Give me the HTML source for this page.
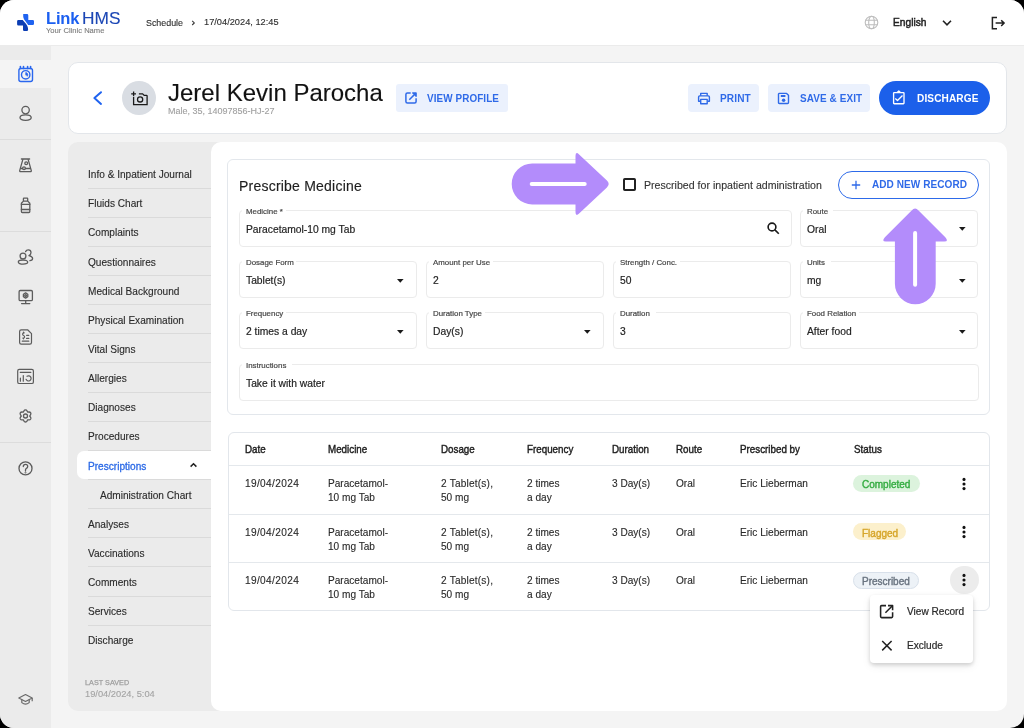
<!DOCTYPE html>
<html><head><meta charset="utf-8"><title>Link HMS</title>
<style>
*{box-sizing:border-box;margin:0;padding:0}
html,body{width:1024px;height:728px;overflow:hidden;background:#000}
body{font-family:"Liberation Sans",sans-serif;color:#1f1f1f;position:relative;-webkit-font-smoothing:antialiased}
#app{position:absolute;left:0;top:0;width:1024px;height:728px;background:#f4f4f4;border-radius:14px;overflow:hidden}
.abs{position:absolute}
#hdr{position:absolute;left:0;top:0;width:1024px;height:46px;background:#fff;border-bottom:1px solid #ebebeb}
#side{position:absolute;left:0;top:46px;width:51px;height:682px;background:#ebebeb}
#pcard{position:absolute;left:68px;top:62px;width:938.5px;height:71.8px;background:#fff;border:1px solid #e3e6ea;border-radius:10px}
#nav{position:absolute;left:68px;top:142px;width:160px;height:569px;background:#ebebeb;border-radius:10px}
#main{position:absolute;left:211px;top:142px;width:795.5px;height:569px;background:#fff;border-radius:10px}
.t{position:absolute;white-space:nowrap;line-height:1;will-change:transform}
</style></head>
<body>
<div id="app">
<div id="hdr"><svg class="abs" style="left:13px;top:10px" width="25" height="25" viewBox="0 0 25 25"><path fill="#1f63f0" d="M10.2,4.1 H14 Q15.3,4.1 15.3,5.4 V10 H19.7 Q21,10 21,11.3 V13.8 Q21,15.1 19.7,15.1 H15.2 C14.2,12.6 10.2,9.6 10.2,6.2 Z"/><path fill="#0b3db3" d="M4.1,11.3 Q4.1,10 5.4,10 H9.7 C11.2,12 15.1,15.2 15.1,19.2 V19.7 Q15.1,21 13.8,21 H11.3 Q10,21 10,19.7 V15.5 H5.4 Q4.1,15.5 4.1,14.2 Z"/></svg>
<div class="t" style="left:45.5px;top:10.33px;font-size:16.5px;color:#1b5ff0;font-weight:bold;letter-spacing:-0.2px">Link</div>
<div class="t" style="left:82px;top:9.66px;font-size:17.3px;color:#1c47b5;font-weight:normal;;-webkit-text-stroke:0.12px #1c47b5">HMS</div>
<div class="t" style="left:45.5px;top:26.57px;font-size:7.6px;color:#7c7c7c;font-weight:normal;;-webkit-text-stroke:0.12px #7c7c7c">Your Clinic Name</div>
<div class="t" style="left:146.2px;top:18.57px;font-size:8.9px;color:#2e2e2e;font-weight:normal;;-webkit-text-stroke:0.12px #2e2e2e">Schedule</div>
<svg class="abs" style="left:190px;top:19px" width="6" height="7" viewBox="0 0 6 7"><path d="M2.2,1.8 L4.3,3.9 L2.2,6" fill="none" stroke="#3a3a3a" stroke-width="1.1"/></svg>
<div class="t" style="left:204px;top:18.27px;font-size:9.25px;color:#2e2e2e;font-weight:normal;;-webkit-text-stroke:0.12px #2e2e2e">17/04/2024, 12:45</div>
<svg class="abs" style="left:864px;top:15px" width="15" height="15" viewBox="0 0 15 15"><g fill="none" stroke="#bdbdbd" stroke-width="1.1"><circle cx="7.5" cy="7.5" r="6.3"/><ellipse cx="7.5" cy="7.5" rx="2.8" ry="6.3"/><path d="M1.4,5.3 H13.6 M1.4,9.7 H13.6"/></g></svg>
<div class="t" style="left:893px;top:18.37px;font-size:10.2px;color:#222;font-weight:normal;;-webkit-text-stroke:0.45px #222">English</div>
<svg class="abs" style="left:941px;top:18px" width="12" height="10" viewBox="0 0 12 10"><path d="M2,2.8 L6,6.8 L10,2.8" fill="none" stroke="#222" stroke-width="1.6"/></svg>
<svg class="abs" style="left:988px;top:14px" width="20" height="18" viewBox="0 0 20 18"><g fill="none" stroke="#222" stroke-width="1.5"><path d="M9,3.4 H4.4 V14.8 H9"/><path d="M7.6,9.1 H16 M13.2,6.2 L16.1,9.1 L13.2,12"/></g></svg>
</div>
<div id="side"><div class="abs" style="left:0;top:14px;width:51px;height:28px;background:#f4f4f4"></div>
<div class="abs" style="left:0;top:93px;width:51px;height:1px;background:#dcdcdc"></div>
<div class="abs" style="left:0;top:184.5px;width:51px;height:1px;background:#dcdcdc"></div>
<div class="abs" style="left:0;top:396px;width:51px;height:1px;background:#dcdcdc"></div>
</div>
<svg class="abs" style="left:13px;top:62px" width="25" height="25" viewBox="0 0 25 25"><g fill="none" stroke="#2a67ee" stroke-width="1.4" stroke-linecap="round" stroke-linejoin="round"><rect x="5.9" y="6.5" width="13.6" height="13" rx="2"/><path d="M7.4,4.6 V6.5 M10.5,4.6 V6.5 M14.6,4.6 V6.5 M17.6,4.6 V6.5" stroke-width="1.6"/><circle cx="12.7" cy="12.8" r="4.2"/><path d="M12.7,12.8 V10.5 A2.3,2.3 0 0 1 14.7,13.9 Z" fill="#2a67ee" stroke-width="0.6"/></g></svg>
<svg class="abs" style="left:13px;top:101px" width="25" height="25" viewBox="0 0 25 25"><g fill="none" stroke="#5c5c5c" stroke-width="1.3" stroke-linecap="round" stroke-linejoin="round"><circle cx="12.6" cy="9.1" r="3.7"/><ellipse cx="12.6" cy="16.6" rx="5.6" ry="2.7"/></g></svg>
<svg class="abs" style="left:13px;top:153px" width="25" height="25" viewBox="0 0 25 25"><g fill="none" stroke="#5c5c5c" stroke-width="1.3" stroke-linecap="round" stroke-linejoin="round"><path d="M8.4,6 H16.6"/><path d="M9.8,6.6 L6.7,17.6 Q6.5,18.7 7.6,18.7 H17.4 Q18.5,18.7 18.3,17.6 L15.2,6.6"/><circle cx="13.2" cy="10.3" r="1.4"/><circle cx="11" cy="15.2" r="1.4"/><path d="M7.8,15.5 H9.6 M12.4,15.5 H17.3"/></g></svg>
<svg class="abs" style="left:13px;top:193px" width="25" height="25" viewBox="0 0 25 25"><g fill="none" stroke="#5c5c5c" stroke-width="1.3" stroke-linecap="round" stroke-linejoin="round"><rect x="10.4" y="5.2" width="4.3" height="3" rx="0.6"/><path d="M10.2,8.4 L8.4,10.3 V18.6 Q8.4,19.5 9.3,19.5 H15.9 Q16.8,19.5 16.8,18.6 V10.3 L15,8.4"/><path d="M8.4,11.4 H16.8 M8.4,16.5 H16.8"/></g></svg>
<svg class="abs" style="left:13px;top:245px" width="25" height="25" viewBox="0 0 25 25"><g fill="none" stroke="#5c5c5c" stroke-width="1.3" stroke-linecap="round" stroke-linejoin="round"><circle cx="10" cy="11" r="2.9"/><ellipse cx="10" cy="17.1" rx="4.7" ry="2.1"/><path d="M12.6,6.6 Q13.4,4.9 15.3,4.9 Q18,4.9 18,7.6 Q18,9.6 16,10.6 Q19.6,11.5 19.6,13.5 Q19.6,15.4 16.9,15.7"/></g></svg>
<svg class="abs" style="left:13px;top:284px" width="25" height="25" viewBox="0 0 25 25"><g fill="none" stroke="#5c5c5c" stroke-width="1.3" stroke-linecap="round" stroke-linejoin="round"><rect x="6.1" y="6.5" width="13.3" height="10.2" rx="1.2"/><path d="M12.7,16.7 V19.6 M8.6,19.6 H16.8"/><path d="M12.6,8.9 L14.8,10.2 V12.8 L12.6,14.1 L10.4,12.8 V10.2 Z"/><circle cx="12.6" cy="11.5" r="0.9"/></g></svg>
<svg class="abs" style="left:13px;top:325px" width="25" height="25" viewBox="0 0 25 25"><g fill="none" stroke="#5c5c5c" stroke-width="1.2" stroke-linecap="round" stroke-linejoin="round"><path d="M8.2,4.8 H14.6 L18.5,8.6 V17.6 Q18.5,19.2 16.9,19.2 H8.2 Q6.6,19.2 6.6,17.6 V6.4 Q6.6,4.8 8.2,4.8 Z"/><path d="M11.2,7.8 Q9.6,7.8 9.6,9.1 Q9.6,10.3 10.5,10.5 Q11.6,10.8 11.6,12 Q11.6,13.1 9.8,13.1 M10.5,7 V7.8 M10.5,13.1 V13.8"/><path d="M13.6,10.3 H15.8 M13.6,13.4 H15.8 M9.3,16.2 H15.8"/></g></svg>
<svg class="abs" style="left:13px;top:364px" width="25" height="25" viewBox="0 0 25 25"><g fill="none" stroke="#5c5c5c" stroke-width="1.2" stroke-linecap="round" stroke-linejoin="round"><rect x="4.7" y="5.4" width="15.7" height="14.1" rx="1.6"/><path d="M7.3,8.4 H17.8 M7.4,14.2 V17.2 M10.3,11.6 V17.2"/><path d="M13.06,15.29 A2.6,2.6 0 1 0 14.0,12.27"/></g></svg>
<svg class="abs" style="left:13px;top:404px" width="25" height="25" viewBox="0 0 25 25"><g fill="none" stroke="#5c5c5c" stroke-width="1.3" stroke-linecap="round" stroke-linejoin="round"><path d="M12.5,5.9 Q13.6,5.9 14.1,7 L14.6,8.1 L15.9,8 Q17.1,7.9 17.7,8.9 Q18.2,9.8 17.5,10.8 L16.7,12 L17.5,13.1 Q18.2,14.1 17.7,15 Q17.1,16 15.9,15.9 L14.6,15.8 L14.1,16.9 Q13.6,18 12.5,18 Q11.4,18 10.9,16.9 L10.4,15.8 L9.1,15.9 Q7.9,16 7.3,15 Q6.8,14.1 7.5,13.1 L8.3,12 L7.5,10.8 Q6.8,9.8 7.3,8.9 Q7.9,7.9 9.1,8 L10.4,8.1 L10.9,7 Q11.4,5.9 12.5,5.9 Z"/><circle cx="12.5" cy="12" r="2"/></g></svg>
<svg class="abs" style="left:13px;top:456px" width="25" height="25" viewBox="0 0 25 25"><g fill="none" stroke="#5c5c5c" stroke-width="1.3" stroke-linecap="round" stroke-linejoin="round"><circle cx="12.5" cy="12.4" r="6.5"/><path d="M10.3,10.6 Q10.3,8.4 12.5,8.4 Q14.7,8.4 14.7,10.4 Q14.7,11.7 13.4,12.4 Q12.5,12.9 12.5,14 V15"/><circle cx="12.5" cy="16.6" r="0.3"/></g></svg>
<svg class="abs" style="left:13px;top:687px" width="25" height="25" viewBox="0 0 25 25"><g fill="none" stroke="#6a6a6a" stroke-width="1.2" stroke-linejoin="round"><path d="M12.5,7.5 L19.2,11 L12.5,14.5 L5.8,11 Z"/><path d="M8.8,12.6 V15.6 Q12.5,18.6 16.2,15.6 V12.6 M19.2,11 V14.2"/></g></svg>

<div id="pcard"></div>
<div id="nav"></div>
<div id="main"></div>
<div class="abs" style="left:76.7px;top:451px;width:140px;height:28px;background:#fff;border-radius:7px 0 0 7px"></div>
<div class="abs" style="left:88px;top:187.50px;width:123px;height:1px;background:#dadada"></div>
<div class="t" style="left:88.3px;top:170.05px;font-size:10.1px;color:#2a2a2a;font-weight:normal;;-webkit-text-stroke:0.12px #2a2a2a">Info &amp; Inpatient Journal</div>
<div class="abs" style="left:88px;top:216.65px;width:123px;height:1px;background:#dadada"></div>
<div class="t" style="left:88.3px;top:199.20px;font-size:10.1px;color:#2a2a2a;font-weight:normal;;-webkit-text-stroke:0.12px #2a2a2a">Fluids Chart</div>
<div class="abs" style="left:88px;top:245.80px;width:123px;height:1px;background:#dadada"></div>
<div class="t" style="left:88.3px;top:228.35px;font-size:10.1px;color:#2a2a2a;font-weight:normal;;-webkit-text-stroke:0.12px #2a2a2a">Complaints</div>
<div class="abs" style="left:88px;top:274.95px;width:123px;height:1px;background:#dadada"></div>
<div class="t" style="left:88.3px;top:257.50px;font-size:10.1px;color:#2a2a2a;font-weight:normal;;-webkit-text-stroke:0.12px #2a2a2a">Questionnaires</div>
<div class="abs" style="left:88px;top:304.10px;width:123px;height:1px;background:#dadada"></div>
<div class="t" style="left:88.3px;top:286.65px;font-size:10.1px;color:#2a2a2a;font-weight:normal;;-webkit-text-stroke:0.12px #2a2a2a">Medical Background</div>
<div class="abs" style="left:88px;top:333.25px;width:123px;height:1px;background:#dadada"></div>
<div class="t" style="left:88.3px;top:315.80px;font-size:10.1px;color:#2a2a2a;font-weight:normal;;-webkit-text-stroke:0.12px #2a2a2a">Physical Examination</div>
<div class="abs" style="left:88px;top:362.40px;width:123px;height:1px;background:#dadada"></div>
<div class="t" style="left:88.3px;top:344.95px;font-size:10.1px;color:#2a2a2a;font-weight:normal;;-webkit-text-stroke:0.12px #2a2a2a">Vital Signs</div>
<div class="abs" style="left:88px;top:391.55px;width:123px;height:1px;background:#dadada"></div>
<div class="t" style="left:88.3px;top:374.10px;font-size:10.1px;color:#2a2a2a;font-weight:normal;;-webkit-text-stroke:0.12px #2a2a2a">Allergies</div>
<div class="abs" style="left:88px;top:420.70px;width:123px;height:1px;background:#dadada"></div>
<div class="t" style="left:88.3px;top:403.25px;font-size:10.1px;color:#2a2a2a;font-weight:normal;;-webkit-text-stroke:0.12px #2a2a2a">Diagnoses</div>
<div class="abs" style="left:88px;top:449.85px;width:123px;height:1px;background:#dadada"></div>
<div class="t" style="left:88.3px;top:432.40px;font-size:10.1px;color:#2a2a2a;font-weight:normal;;-webkit-text-stroke:0.12px #2a2a2a">Procedures</div>
<div class="abs" style="left:88px;top:479.00px;width:123px;height:1px;background:#dadada"></div>
<div class="t" style="left:88.3px;top:461.55px;font-size:10.1px;color:#2c6ae6;font-weight:normal;;-webkit-text-stroke:0.3px #2c6ae6">Prescriptions</div>
<div class="abs" style="left:88px;top:508.15px;width:123px;height:1px;background:#dadada"></div>
<div class="t" style="left:100.2px;top:490.70px;font-size:10.1px;color:#2a2a2a;font-weight:normal;;-webkit-text-stroke:0.12px #2a2a2a">Administration Chart</div>
<div class="abs" style="left:88px;top:537.30px;width:123px;height:1px;background:#dadada"></div>
<div class="t" style="left:88.3px;top:519.85px;font-size:10.1px;color:#2a2a2a;font-weight:normal;;-webkit-text-stroke:0.12px #2a2a2a">Analyses</div>
<div class="abs" style="left:88px;top:566.45px;width:123px;height:1px;background:#dadada"></div>
<div class="t" style="left:88.3px;top:549.00px;font-size:10.1px;color:#2a2a2a;font-weight:normal;;-webkit-text-stroke:0.12px #2a2a2a">Vaccinations</div>
<div class="abs" style="left:88px;top:595.60px;width:123px;height:1px;background:#dadada"></div>
<div class="t" style="left:88.3px;top:578.15px;font-size:10.1px;color:#2a2a2a;font-weight:normal;;-webkit-text-stroke:0.12px #2a2a2a">Comments</div>
<div class="abs" style="left:88px;top:624.75px;width:123px;height:1px;background:#dadada"></div>
<div class="t" style="left:88.3px;top:607.30px;font-size:10.1px;color:#2a2a2a;font-weight:normal;;-webkit-text-stroke:0.12px #2a2a2a">Services</div>
<div class="t" style="left:88.3px;top:636.45px;font-size:10.1px;color:#2a2a2a;font-weight:normal;;-webkit-text-stroke:0.12px #2a2a2a">Discharge</div>
<svg class="abs" style="left:188px;top:461px" width="11" height="8" viewBox="0 0 11 8"><path d="M2.6,5.6 L5.5,2.7 L8.4,5.6" fill="none" stroke="#222" stroke-width="1.5"/></svg>
<div class="t" style="left:85.3px;top:678.91px;font-size:7.2px;color:#9e9e9e;font-weight:normal;letter-spacing:0.05px;-webkit-text-stroke:0.25px #9e9e9e">LAST SAVED</div>
<div class="t" style="left:85.3px;top:689.53px;font-size:9.3px;color:#a3a3a3;font-weight:normal;;-webkit-text-stroke:0.12px #a3a3a3">19/04/2024, 5:04</div>
<svg class="abs" style="left:90px;top:89px" width="16" height="18" viewBox="0 0 16 18"><path d="M11,3.2 L4.4,9 L11,14.9" fill="none" stroke="#1f63f0" stroke-width="2" stroke-linecap="round" stroke-linejoin="round"/></svg>
<div class="abs" style="left:122.2px;top:81.2px;width:33.8px;height:33.8px;border-radius:50%;background:#d9dde3"></div>
<svg class="abs" style="left:130px;top:89px" width="20" height="18" viewBox="0 0 20 18"><g fill="none" stroke="#1a1a1a" stroke-width="1.3"><path d="M3.6,8 V15.7 H17.1 V7 Q17.1,6.4 16.5,6.4 H14.2 L12.6,4.8 H8.9"/><circle cx="10.1" cy="10.4" r="2.6"/><path d="M3.6,2.5 V7.2 M1.2,4.9 H6"/></g></svg>
<div class="t" style="left:168px;top:80.68px;font-size:24px;color:#121212;font-weight:normal;;-webkit-text-stroke:0.12px #121212">Jerel Kevin Parocha</div>
<div class="t" style="left:168px;top:107.28px;font-size:9px;color:#a0a0a0;font-weight:normal;;-webkit-text-stroke:0.12px #a0a0a0">Male, 35, 14097856-HJ-27</div>
<div class="abs" style="left:395.5px;top:84px;width:112.3px;height:28px;border-radius:3px;background:#ebf1fd"></div>
<svg class="abs" style="left:403px;top:91px" width="15" height="15" viewBox="0 0 15 15"><g fill="none" stroke="#2f6ae8" stroke-width="1.5" stroke-linejoin="round"><path d="M7.7,1.9 H4.4 Q2.9,1.9 2.9,3.4 V10.6 Q2.9,12.1 4.4,12.1 H11.6 Q13.1,12.1 13.1,10.6 V7.3"/><path d="M6.3,8.7 L12.6,2.4"/><path d="M9.2,1.9 H13.1 V5.8" fill="#2f6ae8" stroke-width="1.4"/></g></svg>
<div class="t" style="left:427px;top:93.92px;font-size:9.9px;color:#2f6ae8;font-weight:bold;letter-spacing:0.1px;transform:scaleY(1.13);transform-origin:0 8.38px">VIEW PROFILE</div>
<div class="abs" style="left:688.3px;top:84px;width:71.2px;height:28px;border-radius:4px;background:#ebf1fd"></div>
<svg class="abs" style="left:696px;top:91px" width="16" height="15" viewBox="0 0 16 15"><g fill="none" stroke="#2f6ae8" stroke-width="1.4" stroke-linejoin="round"><path d="M4.7,4.7 V2.4 H11.2 V4.7"/><path d="M4.4,10.3 H2.6 V6 Q2.6,4.9 3.7,4.9 H12.3 Q13.4,4.9 13.4,6 V10.3 H11.6"/><rect x="4.7" y="8.4" width="6.5" height="4.4"/></g></svg>
<div class="t" style="left:720px;top:93.95px;font-size:10.1px;color:#2f6ae8;font-weight:bold;letter-spacing:0.1px;transform:scaleY(1.13);transform-origin:0 8.55px">PRINT</div>
<div class="abs" style="left:768.2px;top:84px;width:101.5px;height:28px;border-radius:4px;background:#ebf1fd"></div>
<svg class="abs" style="left:776px;top:91px" width="15" height="15" viewBox="0 0 15 15"><g fill="none" stroke="#2f6ae8" stroke-width="1.4" stroke-linejoin="round"><path d="M3,2.4 H10.6 L12.5,4.3 V11.6 Q12.5,12.5 11.6,12.5 H3.4 Q2.5,12.5 2.5,11.6 V2.9 Z"/><path d="M4.8,5 H9.4" stroke-width="1.9"/></g><circle cx="7.6" cy="9.3" r="1.75" fill="#2f6ae8"/></svg>
<div class="t" style="left:799.8px;top:93.98px;font-size:9.95px;color:#2f6ae8;font-weight:bold;letter-spacing:0.1px;transform:scaleY(1.13);transform-origin:0 8.42px">SAVE &amp; EXIT</div>
<div class="abs" style="left:878.8px;top:81px;width:111px;height:34px;border-radius:17px;background:#1c60ea"></div>
<svg class="abs" style="left:890px;top:89px" width="17" height="17" viewBox="0 0 17 17"><g fill="none" stroke="#fff" stroke-width="1.35" stroke-linejoin="round"><rect x="3.6" y="3.6" width="10.4" height="11.1" rx="0.6"/><path d="M7.2,3.4 L8.8,1.9 L10.4,3.4 Z" fill="#fff"/><path d="M5.3,9.6 L7.5,11.5 L12.5,6.5" stroke-width="1.35"/></g></svg>
<div class="t" style="left:916.5px;top:93.75px;font-size:10.1px;color:#fff;font-weight:bold;letter-spacing:0.1px;transform:scaleY(1.13);transform-origin:0 8.55px">DISCHARGE</div>
<div class="abs" style="left:227px;top:159px;width:762.5px;height:255.5px;border:1px solid #e3e7ec;border-radius:6px;background:#fff"></div>
<div class="t" style="left:239.4px;top:178.55px;font-size:14px;color:#1e1e1e;font-weight:normal;letter-spacing:0.22px;-webkit-text-stroke:0.15px #1e1e1e">Prescribe Medicine</div>
<div class="abs" style="left:623px;top:178.3px;width:12.8px;height:12.8px;border:2px solid #222;border-radius:1.8px"></div>
<div class="t" style="left:644px;top:179.63px;font-size:10.6px;color:#333;font-weight:normal;;-webkit-text-stroke:0.12px #333">Prescribed for inpatient administration</div>
<div class="abs" style="left:837.5px;top:170.5px;width:141px;height:28.2px;border:1.7px solid #2d6ae9;border-radius:14px"></div>
<svg class="abs" style="left:850px;top:179px" width="12" height="12" viewBox="0 0 12 12"><path d="M6,1.8 V10.2 M1.8,6 H10.2" stroke="#2f6ae8" stroke-width="1.3"/></svg>
<div class="t" style="left:872.4px;top:180.39px;font-size:10.05px;color:#2f6ae8;font-weight:bold;letter-spacing:0.05px;transform:scaleY(1.13);transform-origin:0 8.51px">ADD NEW RECORD</div>
<div class="abs" style="left:239px;top:209.8px;width:552.5px;height:37px;border:1px solid #ebebeb;border-radius:4px"></div>
<div class="abs" style="left:242px;top:207.8px;width:44px;height:4px;background:#fff"></div>
<div class="t" style="left:245.8px;top:207.81px;font-size:7.9px;color:#474747;font-weight:normal;;-webkit-text-stroke:0.2px #474747">Medicine *</div>
<div class="t" style="left:246px;top:224.88px;font-size:10.3px;color:#222;font-weight:normal;;-webkit-text-stroke:0.18px #222">Paracetamol-10 mg Tab</div>
<svg class="abs" style="left:766.1px;top:221.20000000000002px" width="15" height="15" viewBox="0 0 15 15"><g fill="none" stroke="#1a1a1a" stroke-width="1.6"><circle cx="6" cy="6" r="3.9"/><path d="M8.9,8.9 L12.8,12.8"/></g></svg>
<div class="abs" style="left:800.4px;top:209.8px;width:178.1px;height:37px;border:1px solid #ebebeb;border-radius:4px"></div>
<div class="abs" style="left:803.4px;top:207.8px;width:30px;height:4px;background:#fff"></div>
<div class="t" style="left:807.1999999999999px;top:207.81px;font-size:7.9px;color:#474747;font-weight:normal;;-webkit-text-stroke:0.2px #474747">Route</div>
<div class="t" style="left:807.4px;top:224.88px;font-size:10.3px;color:#222;font-weight:normal;;-webkit-text-stroke:0.18px #222">Oral</div>
<svg class="abs" style="left:956.5px;top:226.10000000000002px" width="10" height="6" viewBox="0 0 10 6"><path d="M2,1 H8.6 L5.3,4.7 Z" fill="#1a1a1a"/></svg>
<div class="abs" style="left:239px;top:261.3px;width:178.1px;height:37px;border:1px solid #ebebeb;border-radius:4px"></div>
<div class="abs" style="left:242px;top:259.3px;width:54px;height:4px;background:#fff"></div>
<div class="t" style="left:245.8px;top:259.31px;font-size:7.9px;color:#474747;font-weight:normal;;-webkit-text-stroke:0.2px #474747">Dosage Form</div>
<div class="t" style="left:246px;top:276.38px;font-size:10.3px;color:#222;font-weight:normal;;-webkit-text-stroke:0.18px #222">Tablet(s)</div>
<svg class="abs" style="left:395.1px;top:277.6px" width="10" height="6" viewBox="0 0 10 6"><path d="M2,1 H8.6 L5.3,4.7 Z" fill="#1a1a1a"/></svg>
<div class="abs" style="left:426.2px;top:261.3px;width:178.1px;height:37px;border:1px solid #ebebeb;border-radius:4px"></div>
<div class="abs" style="left:429.2px;top:259.3px;width:64px;height:4px;background:#fff"></div>
<div class="t" style="left:433.0px;top:259.31px;font-size:7.9px;color:#474747;font-weight:normal;;-webkit-text-stroke:0.2px #474747">Amount per Use</div>
<div class="t" style="left:433.2px;top:276.38px;font-size:10.3px;color:#222;font-weight:normal;;-webkit-text-stroke:0.18px #222">2</div>
<div class="abs" style="left:613.3px;top:261.3px;width:178.1px;height:37px;border:1px solid #ebebeb;border-radius:4px"></div>
<div class="abs" style="left:616.3px;top:259.3px;width:64px;height:4px;background:#fff"></div>
<div class="t" style="left:620.0999999999999px;top:259.31px;font-size:7.9px;color:#474747;font-weight:normal;;-webkit-text-stroke:0.2px #474747">Strength / Conc.</div>
<div class="t" style="left:620.3px;top:276.38px;font-size:10.3px;color:#222;font-weight:normal;;-webkit-text-stroke:0.18px #222">50</div>
<div class="abs" style="left:800.4px;top:261.3px;width:178.1px;height:37px;border:1px solid #ebebeb;border-radius:4px"></div>
<div class="abs" style="left:803.4px;top:259.3px;width:28px;height:4px;background:#fff"></div>
<div class="t" style="left:807.1999999999999px;top:259.31px;font-size:7.9px;color:#474747;font-weight:normal;;-webkit-text-stroke:0.2px #474747">Units</div>
<div class="t" style="left:807.4px;top:276.38px;font-size:10.3px;color:#222;font-weight:normal;;-webkit-text-stroke:0.18px #222">mg</div>
<svg class="abs" style="left:956.5px;top:277.6px" width="10" height="6" viewBox="0 0 10 6"><path d="M2,1 H8.6 L5.3,4.7 Z" fill="#1a1a1a"/></svg>
<div class="abs" style="left:239px;top:312.4px;width:178.1px;height:37px;border:1px solid #ebebeb;border-radius:4px"></div>
<div class="abs" style="left:242px;top:310.4px;width:44px;height:4px;background:#fff"></div>
<div class="t" style="left:245.8px;top:310.41px;font-size:7.9px;color:#474747;font-weight:normal;;-webkit-text-stroke:0.2px #474747">Frequency</div>
<div class="t" style="left:246px;top:327.48px;font-size:10.3px;color:#222;font-weight:normal;;-webkit-text-stroke:0.18px #222">2 times a day</div>
<svg class="abs" style="left:395.1px;top:328.7px" width="10" height="6" viewBox="0 0 10 6"><path d="M2,1 H8.6 L5.3,4.7 Z" fill="#1a1a1a"/></svg>
<div class="abs" style="left:426.2px;top:312.4px;width:178.1px;height:37px;border:1px solid #ebebeb;border-radius:4px"></div>
<div class="abs" style="left:429.2px;top:310.4px;width:56px;height:4px;background:#fff"></div>
<div class="t" style="left:433.0px;top:310.41px;font-size:7.9px;color:#474747;font-weight:normal;;-webkit-text-stroke:0.2px #474747">Duration Type</div>
<div class="t" style="left:433.2px;top:327.48px;font-size:10.3px;color:#222;font-weight:normal;;-webkit-text-stroke:0.18px #222">Day(s)</div>
<svg class="abs" style="left:582.3px;top:328.7px" width="10" height="6" viewBox="0 0 10 6"><path d="M2,1 H8.6 L5.3,4.7 Z" fill="#1a1a1a"/></svg>
<div class="abs" style="left:613.3px;top:312.4px;width:178.1px;height:37px;border:1px solid #ebebeb;border-radius:4px"></div>
<div class="abs" style="left:616.3px;top:310.4px;width:40px;height:4px;background:#fff"></div>
<div class="t" style="left:620.0999999999999px;top:310.41px;font-size:7.9px;color:#474747;font-weight:normal;;-webkit-text-stroke:0.2px #474747">Duration</div>
<div class="t" style="left:620.3px;top:327.48px;font-size:10.3px;color:#222;font-weight:normal;;-webkit-text-stroke:0.18px #222">3</div>
<div class="abs" style="left:800.4px;top:312.4px;width:178.1px;height:37px;border:1px solid #ebebeb;border-radius:4px"></div>
<div class="abs" style="left:803.4px;top:310.4px;width:56px;height:4px;background:#fff"></div>
<div class="t" style="left:807.1999999999999px;top:310.41px;font-size:7.9px;color:#474747;font-weight:normal;;-webkit-text-stroke:0.2px #474747">Food Relation</div>
<div class="t" style="left:807.4px;top:327.48px;font-size:10.3px;color:#222;font-weight:normal;;-webkit-text-stroke:0.18px #222">After food</div>
<svg class="abs" style="left:956.5px;top:328.7px" width="10" height="6" viewBox="0 0 10 6"><path d="M2,1 H8.6 L5.3,4.7 Z" fill="#1a1a1a"/></svg>
<div class="abs" style="left:239px;top:363.5px;width:739.5px;height:37px;border:1px solid #ebebeb;border-radius:4px"></div>
<div class="abs" style="left:242px;top:361.5px;width:50px;height:4px;background:#fff"></div>
<div class="t" style="left:245.8px;top:361.51px;font-size:7.9px;color:#474747;font-weight:normal;;-webkit-text-stroke:0.2px #474747">Instructions</div>
<div class="t" style="left:246px;top:378.58px;font-size:10.3px;color:#222;font-weight:normal;;-webkit-text-stroke:0.18px #222">Take it with water</div>
<div class="abs" style="left:227.7px;top:432.3px;width:762px;height:178.6px;border:1px solid #e2e6eb;border-radius:6px;background:#fff"></div>
<div class="abs" style="left:228.5px;top:465px;width:760.5px;height:1px;background:#e4e8ec"></div>
<div class="abs" style="left:228.5px;top:513.8px;width:760.5px;height:1px;background:#e4e8ec"></div>
<div class="abs" style="left:228.5px;top:562.2px;width:760.5px;height:1px;background:#e4e8ec"></div>
<div class="t" style="left:245px;top:445.30px;font-size:9.8px;color:#1e1e1e;font-weight:normal;;transform:scaleY(1.1);transform-origin:0 8.30px;-webkit-text-stroke:0.38px #1e1e1e">Date</div>
<div class="t" style="left:327.5px;top:445.30px;font-size:9.8px;color:#1e1e1e;font-weight:normal;;transform:scaleY(1.1);transform-origin:0 8.30px;-webkit-text-stroke:0.38px #1e1e1e">Medicine</div>
<div class="t" style="left:441.1px;top:445.30px;font-size:9.8px;color:#1e1e1e;font-weight:normal;;transform:scaleY(1.1);transform-origin:0 8.30px;-webkit-text-stroke:0.38px #1e1e1e">Dosage</div>
<div class="t" style="left:526.7px;top:445.30px;font-size:9.8px;color:#1e1e1e;font-weight:normal;;transform:scaleY(1.1);transform-origin:0 8.30px;-webkit-text-stroke:0.38px #1e1e1e">Frequency</div>
<div class="t" style="left:611.7px;top:445.30px;font-size:9.8px;color:#1e1e1e;font-weight:normal;;transform:scaleY(1.1);transform-origin:0 8.30px;-webkit-text-stroke:0.38px #1e1e1e">Duration</div>
<div class="t" style="left:675.5px;top:445.30px;font-size:9.8px;color:#1e1e1e;font-weight:normal;;transform:scaleY(1.1);transform-origin:0 8.30px;-webkit-text-stroke:0.38px #1e1e1e">Route</div>
<div class="t" style="left:739.6px;top:445.30px;font-size:9.8px;color:#1e1e1e;font-weight:normal;;transform:scaleY(1.1);transform-origin:0 8.30px;-webkit-text-stroke:0.38px #1e1e1e">Prescribed by</div>
<div class="t" style="left:853.7px;top:445.30px;font-size:9.8px;color:#1e1e1e;font-weight:normal;;transform:scaleY(1.1);transform-origin:0 8.30px;-webkit-text-stroke:0.38px #1e1e1e">Status</div>
<div class="t" style="left:245px;top:479.05px;font-size:10.1px;color:#2a2a2a;font-weight:normal;letter-spacing:0.36px;-webkit-text-stroke:0.12px #2a2a2a">19/04/2024</div>
<div class="t" style="left:327.5px;top:479.05px;font-size:10.1px;color:#2a2a2a;font-weight:normal;;-webkit-text-stroke:0.12px #2a2a2a">Paracetamol-</div>
<div class="t" style="left:327.5px;top:493.05px;font-size:10.1px;color:#2a2a2a;font-weight:normal;;-webkit-text-stroke:0.12px #2a2a2a">10 mg Tab</div>
<div class="t" style="left:441.1px;top:479.05px;font-size:10.1px;color:#2a2a2a;font-weight:normal;letter-spacing:0.2px;-webkit-text-stroke:0.12px #2a2a2a">2 Tablet(s),</div>
<div class="t" style="left:441.1px;top:493.05px;font-size:10.1px;color:#2a2a2a;font-weight:normal;;-webkit-text-stroke:0.12px #2a2a2a">50 mg</div>
<div class="t" style="left:526.7px;top:479.05px;font-size:10.1px;color:#2a2a2a;font-weight:normal;;-webkit-text-stroke:0.12px #2a2a2a">2 times</div>
<div class="t" style="left:526.7px;top:493.05px;font-size:10.1px;color:#2a2a2a;font-weight:normal;;-webkit-text-stroke:0.12px #2a2a2a">a day</div>
<div class="t" style="left:611.7px;top:479.05px;font-size:10.1px;color:#2a2a2a;font-weight:normal;;-webkit-text-stroke:0.12px #2a2a2a">3 Day(s)</div>
<div class="t" style="left:675.5px;top:479.05px;font-size:10.1px;color:#2a2a2a;font-weight:normal;;-webkit-text-stroke:0.12px #2a2a2a">Oral</div>
<div class="t" style="left:739.6px;top:479.05px;font-size:10.1px;color:#2a2a2a;font-weight:normal;;-webkit-text-stroke:0.12px #2a2a2a">Eric Lieberman</div>
<div class="abs" style="left:853.2px;top:475.00px;width:66.5px;height:17px;border-radius:9px;background:#dcf3dd;border:none"></div>
<div class="t" style="left:862px;top:479.84px;font-size:10px;color:#36ad43;font-weight:normal;;-webkit-text-stroke:0.4px #36ad43">Completed</div>
<svg class="abs" style="left:961.2px;top:476.50px" width="6" height="14" viewBox="0 0 6 14"><g fill="#111"><circle cx="3" cy="2.4" r="1.55"/><circle cx="3" cy="7" r="1.55"/><circle cx="3" cy="11.6" r="1.55"/></g></svg>
<div class="t" style="left:245px;top:528.05px;font-size:10.1px;color:#2a2a2a;font-weight:normal;letter-spacing:0.36px;-webkit-text-stroke:0.12px #2a2a2a">19/04/2024</div>
<div class="t" style="left:327.5px;top:528.05px;font-size:10.1px;color:#2a2a2a;font-weight:normal;;-webkit-text-stroke:0.12px #2a2a2a">Paracetamol-</div>
<div class="t" style="left:327.5px;top:542.05px;font-size:10.1px;color:#2a2a2a;font-weight:normal;;-webkit-text-stroke:0.12px #2a2a2a">10 mg Tab</div>
<div class="t" style="left:441.1px;top:528.05px;font-size:10.1px;color:#2a2a2a;font-weight:normal;letter-spacing:0.2px;-webkit-text-stroke:0.12px #2a2a2a">2 Tablet(s),</div>
<div class="t" style="left:441.1px;top:542.05px;font-size:10.1px;color:#2a2a2a;font-weight:normal;;-webkit-text-stroke:0.12px #2a2a2a">50 mg</div>
<div class="t" style="left:526.7px;top:528.05px;font-size:10.1px;color:#2a2a2a;font-weight:normal;;-webkit-text-stroke:0.12px #2a2a2a">2 times</div>
<div class="t" style="left:526.7px;top:542.05px;font-size:10.1px;color:#2a2a2a;font-weight:normal;;-webkit-text-stroke:0.12px #2a2a2a">a day</div>
<div class="t" style="left:611.7px;top:528.05px;font-size:10.1px;color:#2a2a2a;font-weight:normal;;-webkit-text-stroke:0.12px #2a2a2a">3 Day(s)</div>
<div class="t" style="left:675.5px;top:528.05px;font-size:10.1px;color:#2a2a2a;font-weight:normal;;-webkit-text-stroke:0.12px #2a2a2a">Oral</div>
<div class="t" style="left:739.6px;top:528.05px;font-size:10.1px;color:#2a2a2a;font-weight:normal;;-webkit-text-stroke:0.12px #2a2a2a">Eric Lieberman</div>
<div class="abs" style="left:853.2px;top:523.30px;width:53.2px;height:17px;border-radius:9px;background:#fcf0cc;border:none"></div>
<div class="t" style="left:862px;top:528.84px;font-size:10px;color:#d6a52a;font-weight:normal;;-webkit-text-stroke:0.4px #d6a52a">Flagged</div>
<svg class="abs" style="left:961.2px;top:524.80px" width="6" height="14" viewBox="0 0 6 14"><g fill="#111"><circle cx="3" cy="2.4" r="1.55"/><circle cx="3" cy="7" r="1.55"/><circle cx="3" cy="11.6" r="1.55"/></g></svg>
<div class="t" style="left:245px;top:576.45px;font-size:10.1px;color:#2a2a2a;font-weight:normal;letter-spacing:0.36px;-webkit-text-stroke:0.12px #2a2a2a">19/04/2024</div>
<div class="t" style="left:327.5px;top:576.45px;font-size:10.1px;color:#2a2a2a;font-weight:normal;;-webkit-text-stroke:0.12px #2a2a2a">Paracetamol-</div>
<div class="t" style="left:327.5px;top:590.45px;font-size:10.1px;color:#2a2a2a;font-weight:normal;;-webkit-text-stroke:0.12px #2a2a2a">10 mg Tab</div>
<div class="t" style="left:441.1px;top:576.45px;font-size:10.1px;color:#2a2a2a;font-weight:normal;letter-spacing:0.2px;-webkit-text-stroke:0.12px #2a2a2a">2 Tablet(s),</div>
<div class="t" style="left:441.1px;top:590.45px;font-size:10.1px;color:#2a2a2a;font-weight:normal;;-webkit-text-stroke:0.12px #2a2a2a">50 mg</div>
<div class="t" style="left:526.7px;top:576.45px;font-size:10.1px;color:#2a2a2a;font-weight:normal;;-webkit-text-stroke:0.12px #2a2a2a">2 times</div>
<div class="t" style="left:526.7px;top:590.45px;font-size:10.1px;color:#2a2a2a;font-weight:normal;;-webkit-text-stroke:0.12px #2a2a2a">a day</div>
<div class="t" style="left:611.7px;top:576.45px;font-size:10.1px;color:#2a2a2a;font-weight:normal;;-webkit-text-stroke:0.12px #2a2a2a">3 Day(s)</div>
<div class="t" style="left:675.5px;top:576.45px;font-size:10.1px;color:#2a2a2a;font-weight:normal;;-webkit-text-stroke:0.12px #2a2a2a">Oral</div>
<div class="t" style="left:739.6px;top:576.45px;font-size:10.1px;color:#2a2a2a;font-weight:normal;;-webkit-text-stroke:0.12px #2a2a2a">Eric Lieberman</div>
<div class="abs" style="left:853.2px;top:571.60px;width:65.5px;height:17px;border-radius:9px;background:#edf2f7;border:1px solid #d8e0ea"></div>
<div class="t" style="left:862px;top:577.24px;font-size:10px;color:#6a7480;font-weight:normal;;-webkit-text-stroke:0.4px #6a7480">Prescribed</div>
<div class="abs" style="left:950px;top:565.80px;width:28.6px;height:28.6px;border-radius:50%;background:#ececec"></div>
<svg class="abs" style="left:961.2px;top:573.10px" width="6" height="14" viewBox="0 0 6 14"><g fill="#111"><circle cx="3" cy="2.4" r="1.55"/><circle cx="3" cy="7" r="1.55"/><circle cx="3" cy="11.6" r="1.55"/></g></svg>
<div class="abs" style="left:869.7px;top:594.6px;width:103.3px;height:68px;background:#fff;border-radius:4px;box-shadow:0 2px 4px rgba(0,0,0,0.16),0 3px 10px rgba(0,0,0,0.07)"></div>
<svg class="abs" style="left:878px;top:603px" width="17" height="17" viewBox="0 0 17 17"><g fill="none" stroke="#222" stroke-width="1.55" stroke-linejoin="round"><path d="M8,2.6 H3.6 Q2.6,2.6 2.6,3.6 V13.6 Q2.6,14.6 3.6,14.6 H13.6 Q14.6,14.6 14.6,13.6 V9.2"/><path d="M7.4,9.8 L14.2,3"/><path d="M10,2.6 H14.6 V7.2"/></g></svg>
<div class="t" style="left:906.6px;top:606.65px;font-size:10.1px;color:#2a2a2a;font-weight:normal;;-webkit-text-stroke:0.2px #2a2a2a">View Record</div>
<svg class="abs" style="left:879px;top:638px" width="15" height="15" viewBox="0 0 15 15"><path d="M3.2,3 L12.6,12.4 M12.6,3 L3.2,12.4" stroke="#222" stroke-width="1.5"/></svg>
<div class="t" style="left:906.6px;top:640.75px;font-size:10.1px;color:#2a2a2a;font-weight:normal;;-webkit-text-stroke:0.2px #2a2a2a">Exclude</div>
<svg class="abs" style="left:500px;top:140px" width="130" height="90" viewBox="0 0 130 90"><path fill="#b38cfb" d="M75.5,23.4 V16 Q75.5,11 79.1,14.4 L106.9,40.6 Q110.5,44 106.9,47.4 L79.1,73.6 Q75.5,77 75.5,72 V64.4 H32.2 A20.5,20.5 0 0 1 32.2,23.4 Z"/><path d="M31.7,44 H84.7" stroke="#fff" stroke-width="4" stroke-linecap="round"/></svg>
<svg class="abs" style="left:870px;top:200px" width="90" height="110" viewBox="0 0 90 110"><path fill="#b38cfb" d="M24.9,41.4 H17.6 Q10.6,42.2 14.9,37.2 L41.65,10.4 Q45.1,6.8 48.55,10.4 L75.3,37.2 Q79.6,42.2 72.6,41.4 H65.7 V83.8 A20.4,20.4 0 0 1 24.9,83.8 Z"/><path d="M45.1,33 V84.7" stroke="#fff" stroke-width="4" stroke-linecap="round"/></svg>

</div>
</body></html>
